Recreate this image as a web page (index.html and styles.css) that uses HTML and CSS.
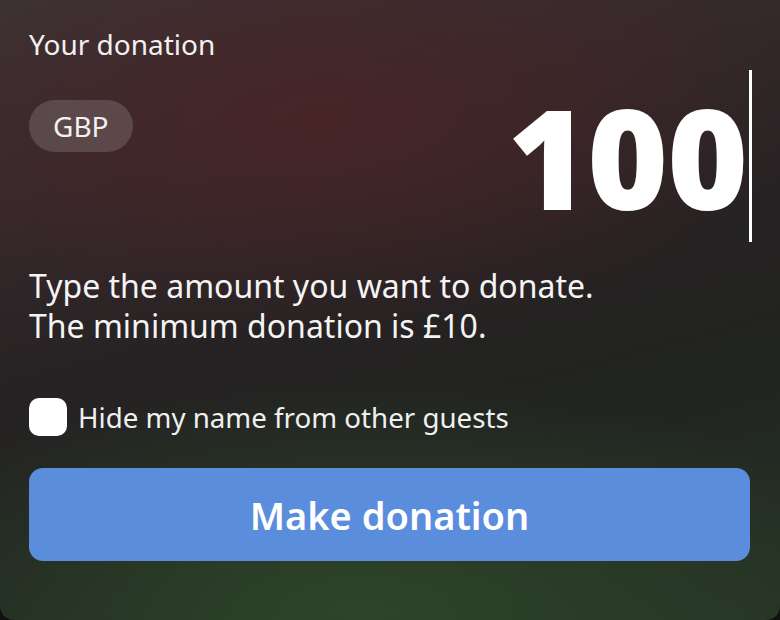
FILE: index.html
```html
<!DOCTYPE html>
<html>
<head>
  <title>Donation</title>
  <meta charset="UTF-8">
  <link rel="stylesheet" href="styles.css">
</head>
<body>
  <div class="panel">
    <div class="label">Your donation</div>

    <div class="amount-row">
      <span class="currency">GBP</span>
      <div class="amount">
        <span class="value">100</span>
        <span class="caret"></span>
      </div>
    </div>

    <p class="hint">Type the amount you want to donate.<br>The minimum donation is £10.</p>

    <label class="check">
      <span class="box"></span>
      <span>Hide my name from other guests</span>
    </label>

    <button class="donate">Make donation</button>
  </div>
</body>
</html>
```

FILE: styles.css
```css
html, body {
  margin: 0;
  height: 100%;
  background: #111;
}
body {
  font-family: "Noto Sans", "Open Sans", sans-serif;
  color: #fff;
}
.panel {
  box-sizing: border-box;
  height: 620px;
  padding: 27px 30px 0 29px;
  border-radius: 0 0 14px 14px;
  background:
    radial-gradient(ellipse 480px 220px at 320px 120px, rgba(76, 36, 38, 0.8), rgba(76, 36, 38, 0) 100%),
    radial-gradient(ellipse 560px 230px at 360px 610px, rgba(46, 70, 42, 0.95), rgba(46, 70, 42, 0) 100%),
    linear-gradient(165deg, #3b3436 0%, #35292b 25%, #262223 48%, #212421 68%, #263225 100%);
}
.label {
  font-size: 28px;
  line-height: 34px;
  color: #f2f0f0;
}
.amount-row {
  display: flex;
  justify-content: space-between;
  align-items: flex-start;
  margin-top: 39px;
}
.currency {
  display: inline-block;
  padding: 0 24px;
  height: 52px;
  line-height: 52px;
  border-radius: 26px;
  background: rgba(255, 255, 255, 0.15);
  font-size: 28px;
  color: #f4f1f1;
}
.amount {
  display: flex;
  align-items: center;
  margin-top: -30px;
  margin-right: -2px;
}
.value {
  font-family: "Open Sans", sans-serif;
  font-weight: 800;
  font-size: 138px;
  line-height: 172px;
  letter-spacing: -1px;
}
.caret {
  width: 3px;
  height: 172px;
  margin-left: 2px;
  background: #fff;
}
.hint {
  margin: 24px 0 0;
  font-size: 32px;
  line-height: 40px;
  color: #f4f4f4;
}
.check {
  display: flex;
  align-items: center;
  gap: 11px;
  margin-top: 52px;
  font-size: 27.7px;
  line-height: 38px;
  color: #f0f0f0;
}
.box {
  width: 38px;
  height: 38px;
  border-radius: 10px;
  background: #fff;
}
.donate {
  display: block;
  width: 100%;
  height: 93px;
  margin-top: 32px;
  border: 0;
  border-radius: 14px;
  background: #5b8ddd;
  color: #fff;
  font-family: "Noto Sans", sans-serif;
  font-weight: 600;
  font-size: 38px;
  cursor: pointer;
}
```
